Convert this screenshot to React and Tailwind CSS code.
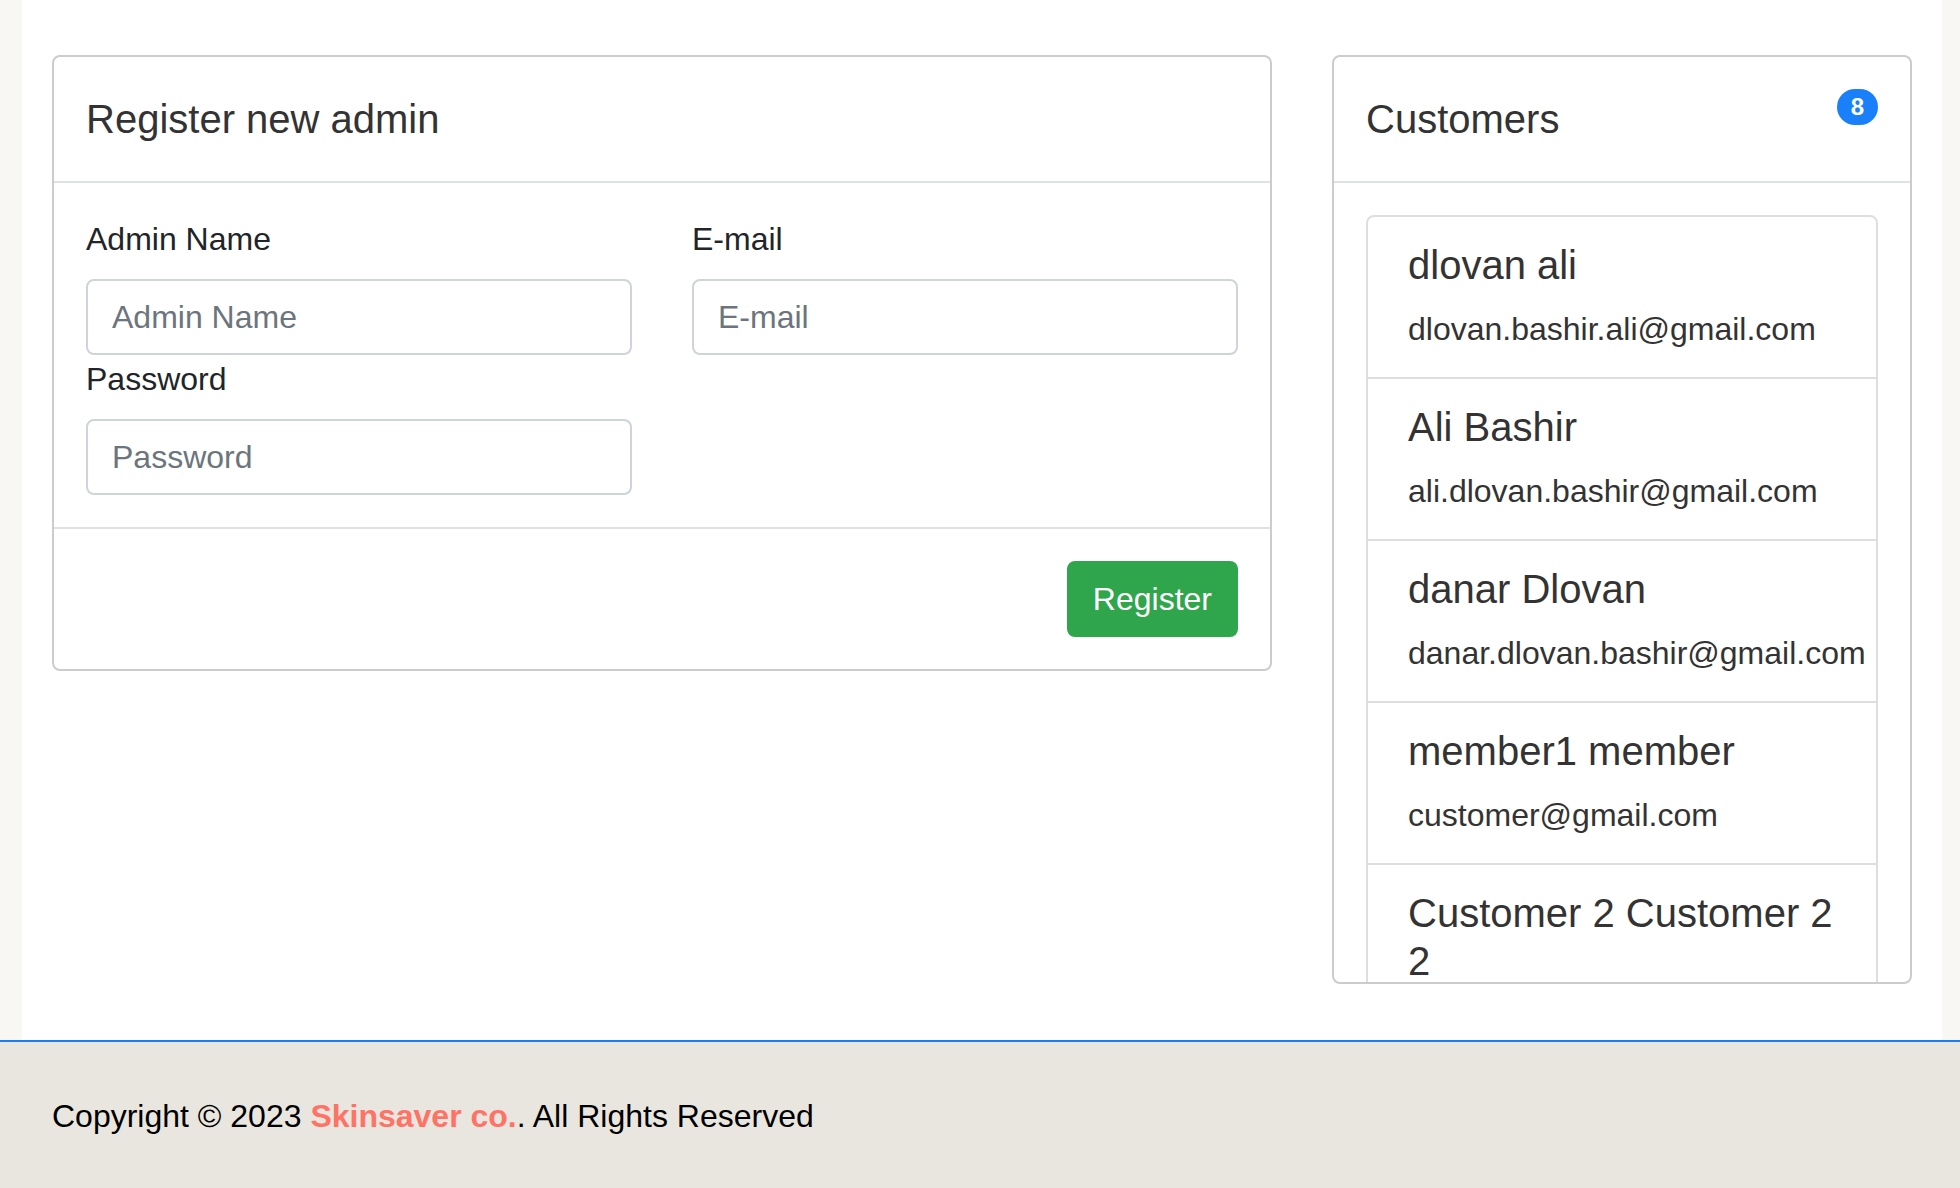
export default function App() {
  const customers = [
    ["dlovan ali", "dlovan.bashir.ali@gmail.com"],
    ["Ali Bashir", "ali.dlovan.bashir@gmail.com"],
    ["danar Dlovan", "danar.dlovan.bashir@gmail.com"],
    ["member1 member", "customer@gmail.com"],
    ["Customer 2 Customer 2 2", "customer2@gmail.com"],
  ];

  return (
    <div className="w-full font-['Liberation_Sans',Arial,sans-serif]">
      <div className="flex h-[1040px] bg-[#f8f7f3]">
        <div className="w-[22px] shrink-0" />
        <main className="w-[1920px] shrink-0 bg-white px-[30px] pt-[55px]">
          <div className="grid grid-cols-[1220px_580px] items-start gap-x-[60px]">
            {/* Register card */}
            <div className="rounded-[8px] border-2 border-[#cccccc] bg-white">
              <div className="border-b-2 border-[#dee2e6] px-[32px] py-[38px]">
                <h5 className="text-[40px] leading-[48px] text-[#333333]">Register new admin</h5>
              </div>
              <div className="p-[32px]">
                <div className="grid grid-cols-2 gap-x-[60px]">
                  <div>
                    <label className="mb-[16px] block text-[32px] leading-[48px] text-[#212529]">Admin Name</label>
                    <input
                      placeholder="Admin Name"
                      className="block h-[76px] w-full rounded-[8px] border-2 border-[#ced4da] px-[24px] text-[32px] text-[#495057] outline-none placeholder:text-[#6c757d]"
                    />
                  </div>
                  <div>
                    <label className="mb-[16px] block text-[32px] leading-[48px] text-[#212529]">E-mail</label>
                    <input
                      placeholder="E-mail"
                      className="block h-[76px] w-full rounded-[8px] border-2 border-[#ced4da] px-[24px] text-[32px] text-[#495057] outline-none placeholder:text-[#6c757d]"
                    />
                  </div>
                  <div>
                    <label className="mb-[16px] block text-[32px] leading-[48px] text-[#212529]">Password</label>
                    <input
                      type="password"
                      placeholder="Password"
                      className="block h-[76px] w-full rounded-[8px] border-2 border-[#ced4da] px-[24px] text-[32px] text-[#495057] outline-none placeholder:text-[#6c757d]"
                    />
                  </div>
                </div>
              </div>
              <div className="flex justify-end border-t-2 border-[#dee2e6] p-[32px]">
                <button className="h-[76px] rounded-[8px] border-2 border-[#2fa64c] bg-[#2fa64c] px-[24px] text-[32px] leading-[48px] text-white">
                  Register
                </button>
              </div>
            </div>

            {/* Customers card */}
            <div className="overflow-hidden rounded-[8px] border-2 border-[#cccccc] bg-white">
              <div className="flex items-start justify-between border-b-2 border-[#dee2e6] px-[32px] py-[38px]">
                <h5 className="text-[40px] leading-[48px] text-[#333333]">Customers</h5>
                <span className="-mt-[6px] rounded-full bg-[#1a80fa] px-[14px] py-[6px] text-[24px] font-bold leading-[24px] text-white">
                  8
                </span>
              </div>
              <div className="h-[799px] overflow-hidden px-[32px] pt-[32px]">
                <ul>
                  {customers.map(([name, email], i) => (
                    <li
                      key={i}
                      className={
                        i === 0
                          ? "rounded-t-[8px] border-2 border-[#dedede] px-[40px] py-[24px]"
                          : "border-2 border-t-0 border-[#dedede] px-[40px] py-[24px]"
                      }
                    >
                      <h5 className="mb-[16px] text-[40px] leading-[48px] text-[#333333]">{name}</h5>
                      <p className="whitespace-nowrap text-[32px] leading-[48px] text-[#333333]">{email}</p>
                    </li>
                  ))}
                </ul>
              </div>
            </div>
          </div>
        </main>
        <div className="flex-1" />
      </div>
      <footer className="h-[148px] border-t-2 border-[#1a7ff5] bg-[#e9e6df] pl-[52px] pt-[50px]">
        <p className="text-[32px] leading-[48px] text-black">
          Copyright © 2023 <span className="font-bold text-[#ff7366]">Skinsaver co.</span>. All Rights Reserved
        </p>
      </footer>
    </div>
  );
}
